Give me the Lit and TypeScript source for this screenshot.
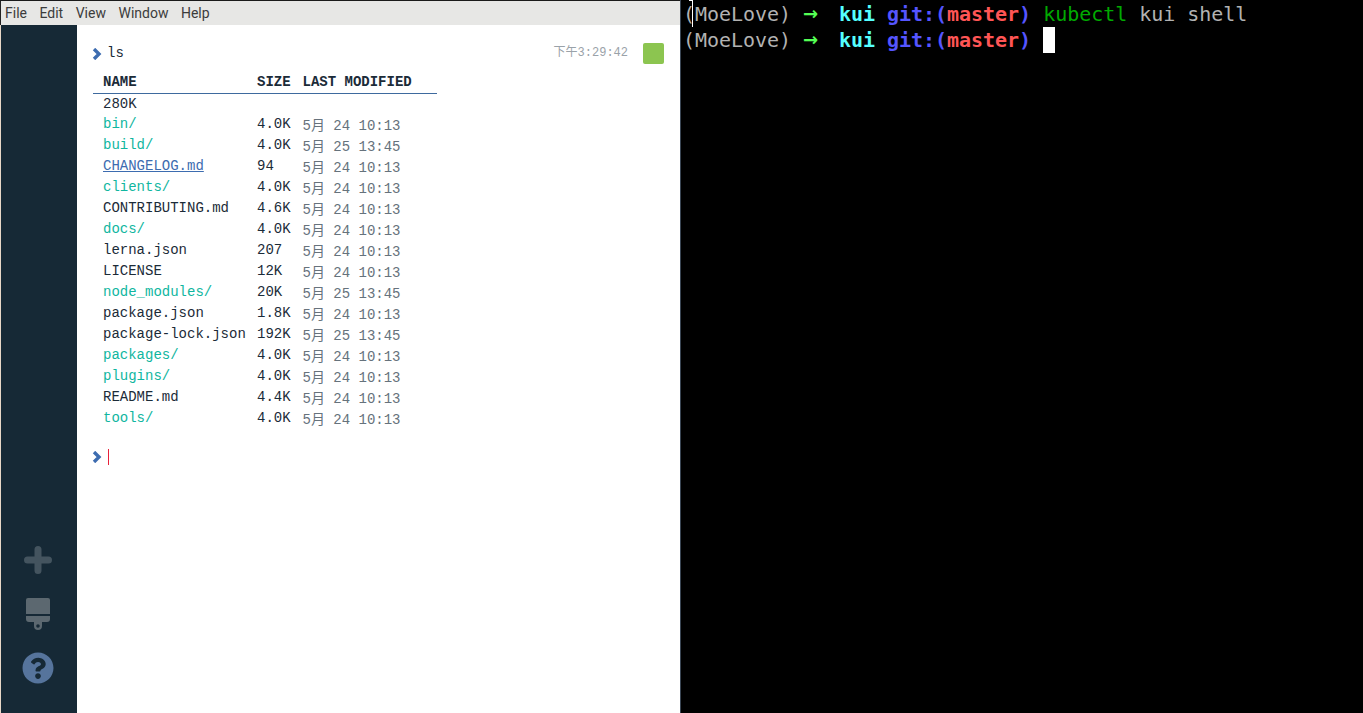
import { LitElement, html, css, svg } from "lit";
import { customElement } from "lit/decorators.js";

type Row = [string, string, string, string?];
const rows: Row[] = [
  ["bin/", "4.0K", "5月 24 10:13", "dir"],
  ["build/", "4.0K", "5月 25 13:45", "dir"],
  ["CHANGELOG.md", "94", "5月 24 10:13", "link"],
  ["clients/", "4.0K", "5月 24 10:13", "dir"],
  ["CONTRIBUTING.md", "4.6K", "5月 24 10:13"],
  ["docs/", "4.0K", "5月 24 10:13", "dir"],
  ["lerna.json", "207", "5月 24 10:13"],
  ["LICENSE", "12K", "5月 24 10:13"],
  ["node_modules/", "20K", "5月 25 13:45", "dir"],
  ["package.json", "1.8K", "5月 24 10:13"],
  ["package-lock.json", "192K", "5月 25 13:45"],
  ["packages/", "4.0K", "5月 24 10:13", "dir"],
  ["plugins/", "4.0K", "5月 24 10:13", "dir"],
  ["README.md", "4.4K", "5月 24 10:13"],
  ["tools/", "4.0K", "5月 24 10:13", "dir"],
];

const chevron = svg`<svg class="chev" width="10" height="12" viewBox="0 0 10 12"><path d="M2 1 L7 6 L2 11" fill="none" stroke="#3d6cb0" stroke-width="3.4"/></svg>`;

@customElement("app-root")
export class AppRoot extends LitElement {
  static styles = css`
    :host { display: block; width: 1363px; height: 713px; overflow: hidden; background: #000; }
    .page { display: grid; grid-template-columns: 680px 1px 682px; height: 713px; }
    .win { display: flex; flex-direction: column; height: 713px; border-top: 1px solid #1a1a1a; box-sizing: border-box; }
    .menu { display: flex; gap: 12.5px; height: 24px; align-items: center; background: #e7e7e5; padding-left: 4px; border-left: 1px solid #222; box-sizing: border-box;
      font: 14px Roboto, sans-serif; color: #3c3c3c; }
    .body { flex: 1; display: flex; min-height: 0; }
    .side { width: 77px; box-sizing: border-box; background: #162936; border-left: 1px solid #e8d8c8; display: flex; flex-direction: column; align-items: center; justify-content: flex-end; padding: 0 2px 29px 0; flex: none; }
    .side svg { display: block; }
    .brush { margin-top: 24px; }
    .help { margin-top: 22px; }
    .main { flex: 1; background: #fff; padding: 18px 16px 0 16px; font: 14px/21px "Liberation Mono", "Noto Sans CJK SC", monospace; color: #1b2b38; }
    .cmd { display: flex; align-items: center; height: 21px; }
    .chev { margin: 0 5px 0 -1px; flex: none; }
    .time { margin-left: auto; margin-right: 15px; font-size: 12px; color: #9aa2a9; font-family: "Liberation Mono", "Noto Sans CJK SC", monospace; }
    .led { width: 21px; height: 21px; background: #8cc550; border-radius: 2px; }
    .tbl { display: grid; grid-template-columns: 154px 45.5px 134.5px; width: 344px; margin-top: 8px; padding-left: 10px; box-sizing: border-box; grid-auto-rows: 21px; }
    .tbl > div { white-space: nowrap; }
    .hd { font-weight: 700; border-bottom: 1px solid #3e6a9e; height: 21px; margin-left: -10px; padding-left: 10px; }
    .hd.n { margin-left: 0; padding-left: 0; }
    .first { grid-column: 1 / -1; line-height: 20px; margin-top: 1px; }
    .dir { color: #10b6a0; }
    .link { color: #3d6cb0; text-decoration: underline; }
    .date { color: #66727c; position: relative; top: 2px; }
    .prompt { display: flex; align-items: center; height: 21px; margin-top: 17px; }
    .caret { width: 1px; height: 16px; margin-left: 1px; background: #e8213a; }
    .divider { background: #3a4654; }
    .term { position: relative; background: #000; padding: 1px 0 0 2px; font: 20px/26px "DejaVu Sans Mono", monospace; letter-spacing: -0.04px; color: #b2b2b2; }
    .line { height: 26px; white-space: pre; }
    .g { display: inline-block; width: 12px; color: #55ff55; font: 700 18px/26px "DejaVu Sans", sans-serif; vertical-align: top; }
    .c { color: #55ffff; font-weight: 700; }
    .b { color: #5555ff; font-weight: 700; }
    .r { color: #ff5555; font-weight: 700; }
    .k { color: #00aa00; }
    .cur { display: inline-block; width: 12px; height: 26px; background: #fff; vertical-align: top; }
    .ibeam { position: absolute; left: 11px; top: 0; width: 1px; height: 27px; background: #fff; }
    .ibeamtop { position: absolute; left: 8px; top: 0; width: 4px; height: 1px; background: #fff; }
  `;

  private promptLine(rest: unknown) {
    return html`<div class="line">(MoeLove) <span class="g">→</span>  <span class="c">kui</span> <span class="b">git:(</span><span class="r">master</span><span class="b">)</span> ${rest}</div>`;
  }

  render() {
    return html`<div class="page">
      <div class="win">
        <div class="menu"><span>File</span><span>Edit</span><span>View</span><span>Window</span><span>Help</span></div>
        <div class="body">
          <div class="side">
            <svg width="28" height="28" viewBox="0 0 28 28"><path d="M14 3.5V24.5M3.5 14H24.5" stroke="#44545f" stroke-width="7" stroke-linecap="round"/></svg>
            <svg class="brush" width="24" height="32" viewBox="0 0 24 32"><path d="M2 0H22a2 2 0 0 1 2 2V16H0V2a2 2 0 0 1 2-2Z" fill="#5c6870"/><path fill-rule="evenodd" d="M0 18H24V21a3 3 0 0 1-3 3H16V28a4 4 0 0 1-8 0V24H3a3 3 0 0 1-3-3ZM12 26.2a1.8 1.8 0 1 0 0 3.6a1.8 1.8 0 1 0 0-3.6Z" fill="#5c6870"/></svg>
            <svg class="help" width="32" height="32" viewBox="0 0 512 512"><path fill="#56749c" d="M504 256c0 136.997-111.043 248-248 248S8 392.997 8 256C8 119.083 119.043 8 256 8s248 111.083 248 248zM262.655 90c-54.497 0-89.255 22.957-116.549 63.758-3.536 5.286-2.353 12.415 2.715 16.258l34.699 26.31c5.205 3.947 12.621 3.008 16.665-2.122 17.864-22.658 30.113-35.797 57.303-35.797 20.429 0 45.698 13.148 45.698 32.958 0 14.976-12.363 22.667-32.534 33.976C247.128 238.528 216 254.941 216 296v4c0 6.627 5.373 12 12 12h56c6.627 0 12-5.373 12-12v-1.333c0-28.462 83.186-29.647 83.186-106.667 0-58.002-60.165-102-116.531-102zM256 338c-25.365 0-46 20.635-46 46 0 25.364 20.635 46 46 46s46-20.636 46-46c0-25.365-20.635-46-46-46z"/></svg>
          </div>
          <div class="main">
            <div class="cmd">${chevron}<span>ls</span><span class="time">下午3:29:42</span><span class="led"></span></div>
            <div class="tbl">
              <div class="hd">NAME</div><div class="hd n">SIZE</div><div class="hd n">LAST MODIFIED</div>
              <div class="first">280K</div>
              ${rows.map(([n, s, d, k]) => html`<div class=${k ?? ""}>${n}</div><div>${s}</div><div class="date">${d}</div>`)}
            </div>
            <div class="prompt">${chevron}<span class="caret"></span></div>
          </div>
        </div>
      </div>
      <div class="divider"></div>
      <div class="term">
        ${this.promptLine(html`<span class="k">kubectl</span> kui shell`)}
        ${this.promptLine(html`<span class="cur"></span>`)}
        <div class="ibeam"></div><div class="ibeamtop"></div>
      </div>
    </div>`;
  }
}
